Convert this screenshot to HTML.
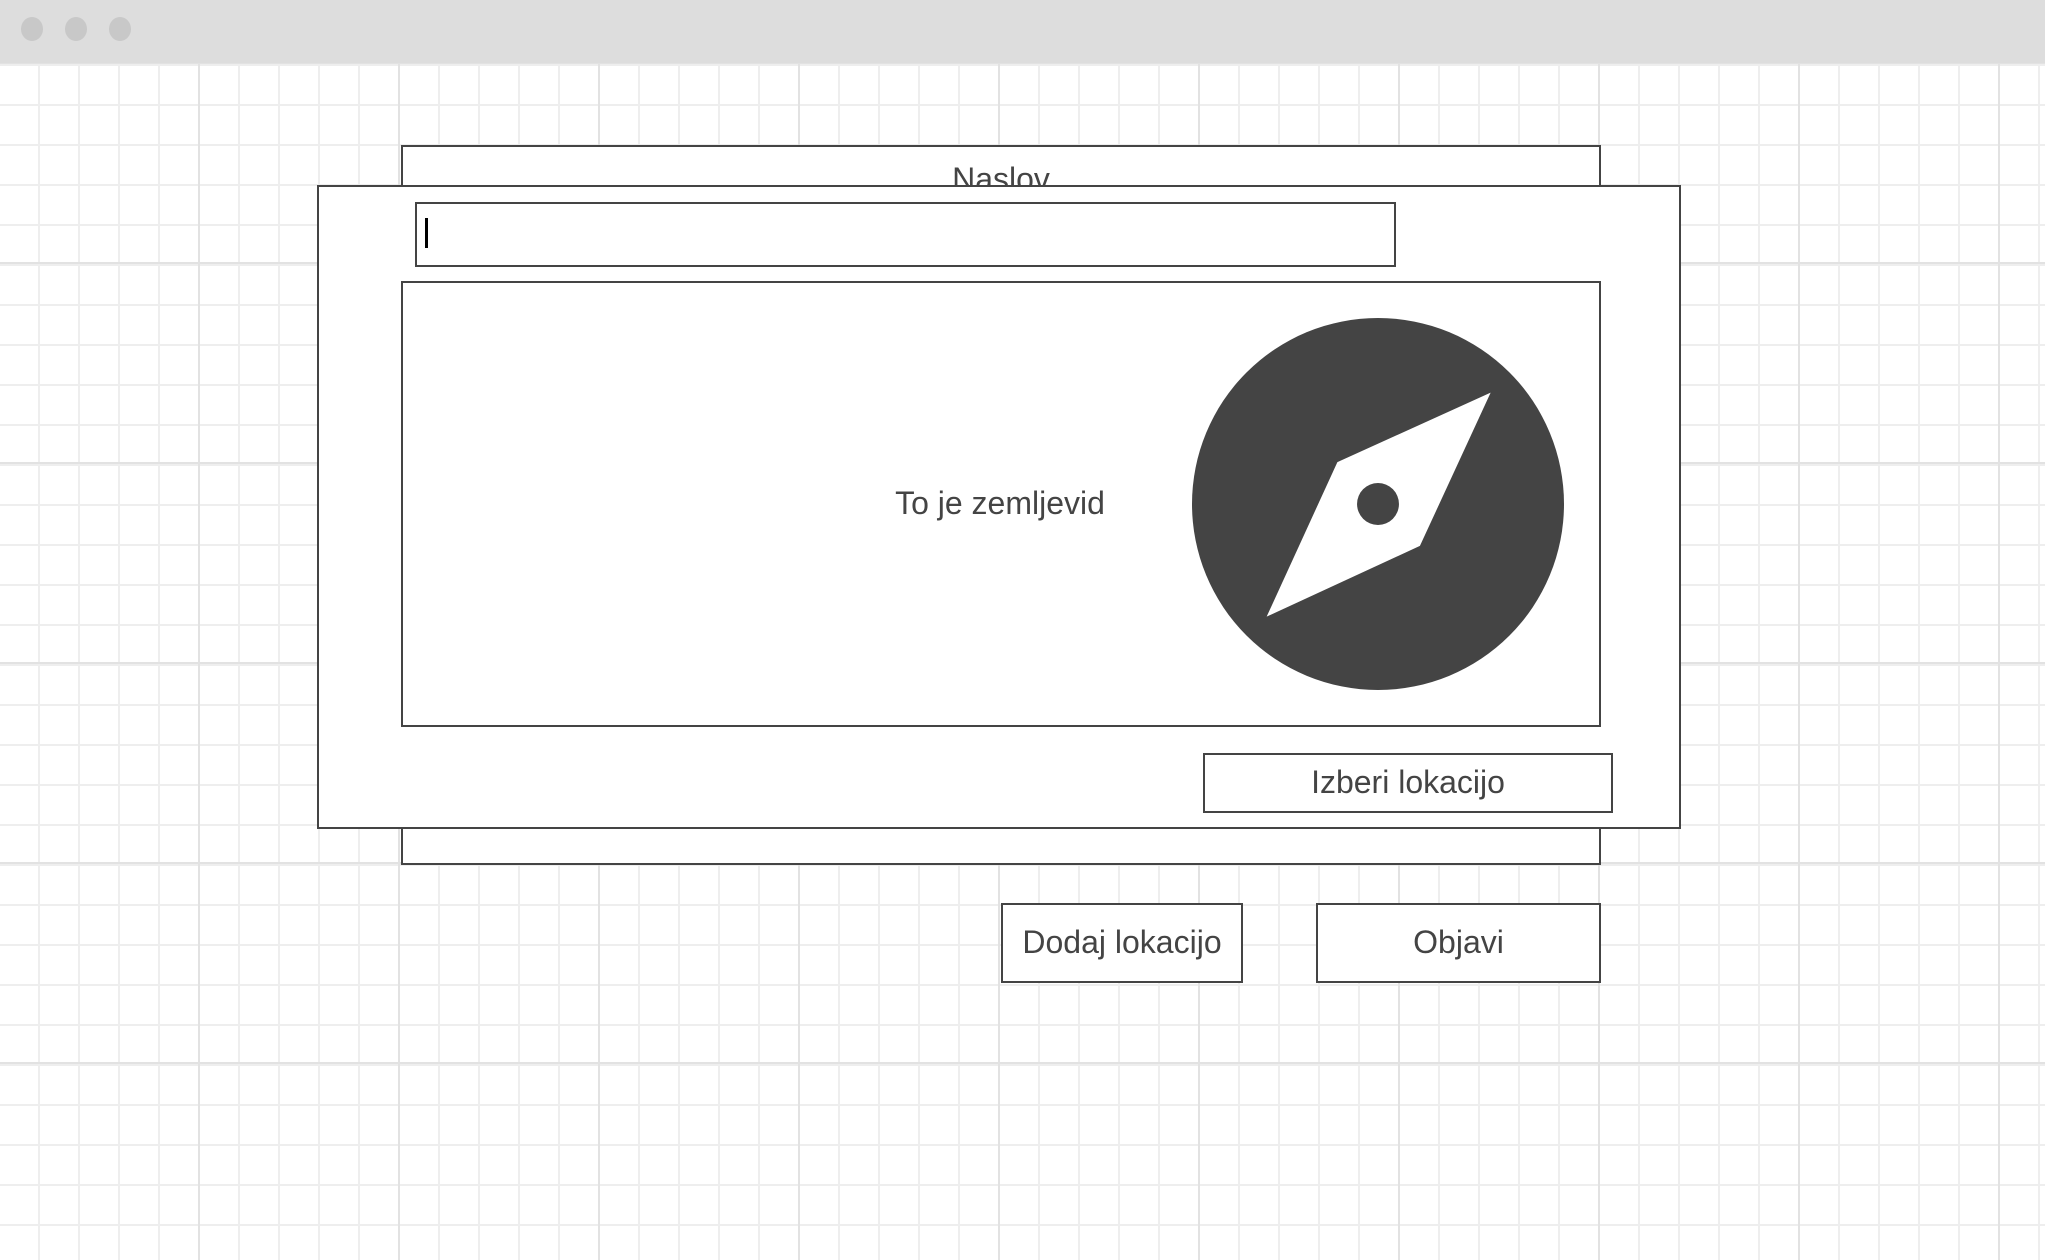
<!DOCTYPE html>
<html><head><meta charset="utf-8"><style>
html,body{margin:0;padding:0;}
body{width:2045px;height:1260px;position:relative;overflow:hidden;background:#fff;font-family:"Liberation Sans",sans-serif;color:#444;}
.bar{position:absolute;left:0;top:0;width:2045px;height:63px;background:#dddddd;}
.dot{position:absolute;top:17px;width:22px;height:24px;border-radius:50%;background:#c8c8c8;}
.grid{position:absolute;left:0;top:63px;width:2045px;height:1197px;
background-image:
linear-gradient(to right,#e2e2e2 2px,transparent 2px),
linear-gradient(to bottom,#e2e2e2 2px,transparent 2px),
linear-gradient(to right,#eeeeee 2px,transparent 2px),
linear-gradient(to bottom,#eeeeee 2px,transparent 2px);
background-size:200px 200px,200px 200px,40px 40px,40px 40px;
background-position:-2px 0,0 -1px,-2px 0,0 1px;}
.box{position:absolute;border:2px solid #444;background:#fff;box-sizing:border-box;}
.t{position:absolute;font-size:32px;text-align:center;}
</style></head><body>
<div class="bar"><div class="dot" style="left:21px"></div><div class="dot" style="left:65px"></div><div class="dot" style="left:109px"></div></div>
<div class="grid"></div>
<div class="box" style="left:401px;top:145px;width:1200px;height:720px;"></div>
<div class="t" style="left:401px;width:1200px;top:161px;">Naslov</div>
<div class="box" style="left:317px;top:185px;width:1364px;height:644px;"></div>
<div class="box" style="left:415px;top:202px;width:981px;height:65px;"></div>
<div style="position:absolute;left:425px;top:218px;width:3px;height:30px;background:#000;"></div>
<div class="box" style="left:401px;top:281px;width:1200px;height:446px;"></div>
<div class="t" style="left:800px;width:400px;top:485px;">To je zemljevid</div>
<svg style="position:absolute;left:1192px;top:318px" width="372" height="372" viewBox="-142 -142 284 284">
<circle cx="0" cy="0" r="142" fill="#444"/>
<polygon points="86,-85 -31,-32 -85,86 32,32" fill="#fff"/>
<circle cx="0" cy="0" r="16" fill="#444"/>
</svg>
<div class="box" style="left:1203px;top:753px;width:410px;height:60px;"></div>
<div class="t" style="left:1203px;width:410px;top:764px;">Izberi lokacijo</div>
<div class="box" style="left:1001px;top:903px;width:242px;height:80px;"></div>
<div class="t" style="left:1001px;width:242px;top:924px;">Dodaj lokacijo</div>
<div class="box" style="left:1316px;top:903px;width:285px;height:80px;"></div>
<div class="t" style="left:1316px;width:285px;top:924px;">Objavi</div>
</body></html>
